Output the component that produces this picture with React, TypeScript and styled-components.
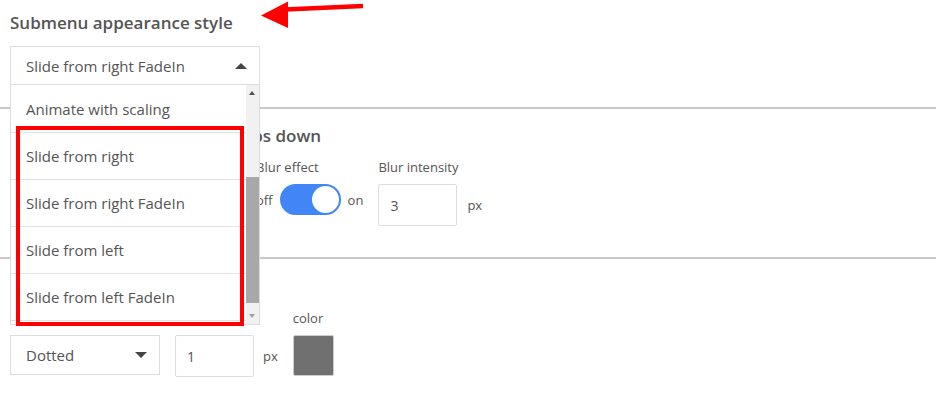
import React from 'react'
import styled, { createGlobalStyle } from 'styled-components'

const GlobalStyle = createGlobalStyle`
  html, body {
    margin: 0;
    padding: 0;
    background: #fff;
  }
  body {
    font-family: "Open Sans", "Noto Sans", sans-serif;
    color: #555;
  }
`

const options = [
  'Animate with scaling',
  'Slide from right',
  'Slide from right FadeIn',
  'Slide from left',
  'Slide from left FadeIn',
]

function App() {
  return (
    <Page>
      <GlobalStyle />
      <Section $pad="12px 10px 22px">
        <Heading>Submenu appearance style</Heading>
        <SelectWrap>
          <Select $width={250} $open>
            Slide from right FadeIn
            <Caret $up />
          </Select>
          <DropList>
            <Items>
              {options.map((o) => (
                <Item key={o}>{o}</Item>
              ))}
            </Items>
            <Scrollbar>
              <ScrollArrow $up />
              <Thumb />
              <ScrollArrow />
            </Scrollbar>
            <Highlight />
          </DropList>
        </SelectWrap>
        <Arrow width="110" height="34" viewBox="0 0 110 34">
          <path d="M108 6 L30 9.5" stroke="#f00" strokeWidth="4.5" fill="none" />
          <polygon points="6,15.5 33,1.5 33,28" fill="#f00" />
        </Arrow>
      </Section>

      <Section $pad="16px 10px 31px" $rule>
        <Heading>Blur page when submenu drops down</Heading>
        <Row $gap={15}>
          <Field>
            <Label>Overlay</Label>
            <Select $width={231}>None<Caret /></Select>
          </Field>
          <Field>
            <Label>Blur effect</Label>
            <Inline $gap={7}>
              <Small>off</Small>
              <Toggle $on>
                <Knob />
              </Toggle>
              <Small>on</Small>
            </Inline>
          </Field>
          <Field>
            <Label>Blur intensity</Label>
            <Inline $gap={10}>
              <NumberBox $width={79}>3</NumberBox>
              <Small>px</Small>
            </Inline>
          </Field>
        </Row>
      </Section>

      <Section $pad="17px 10px 20px" $rule>
        <Heading>Submenu border</Heading>
        <Row $gap={15}>
          <Field>
            <Label>Type</Label>
            <Select $width={150}>Dotted<Caret /></Select>
          </Field>
          <Field>
            <Label>width</Label>
            <Inline $gap={9}>
              <NumberBox $width={79}>1</NumberBox>
              <Small>px</Small>
            </Inline>
          </Field>
          <Field>
            <Label>color</Label>
            <Swatch $color="#707070" />
          </Field>
        </Row>
      </Section>
    </Page>
  )
}

export default App

const Page = styled.div`
  width: 936px;
  height: 406px;
  overflow: hidden;
  position: relative;
`

const Section = styled.div<{ $pad: string; $rule?: boolean }>`
  position: relative;
  padding: ${(p) => p.$pad};
  border-top: ${(p) => (p.$rule ? '2px solid #c8c8c8' : 'none')};
`

const Heading = styled.h3`
  margin: 0 0 12px;
  font-size: 17px;
  font-weight: 600;
  line-height: 22px;
  color: #555;
`

const SelectWrap = styled.div`
  position: relative;
  z-index: 5;
  width: 250px;
`

const Select = styled.div<{ $width: number; $open?: boolean }>`
  position: relative;
  box-sizing: border-box;
  width: ${(p) => p.$width}px;
  height: ${(p) => (p.$open ? 39 : 40)}px;
  border: 1px solid #ddd;
  padding-left: 15px;
  display: flex;
  align-items: center;
  font-size: 15px;
  color: #555;
  background: #fff;
`

const Caret = styled.span<{ $up?: boolean }>`
  position: absolute;
  right: 12px;
  top: 50%;
  margin-top: -3px;
  width: 0;
  height: 0;
  border-left: 6px solid transparent;
  border-right: 6px solid transparent;
  ${(p) => (p.$up ? 'border-bottom: 6px solid #444;' : 'border-top: 6px solid #444;')}
`

const DropList = styled.div`
  position: absolute;
  left: 0;
  top: 38px;
  box-sizing: border-box;
  width: 250px;
  height: 241px;
  border: 1px solid #ddd;
  background: #fff;
  display: flex;
`

const Items = styled.div`
  flex: 1;
  overflow: hidden;
`

const Item = styled.div`
  height: 47px;
  box-sizing: border-box;
  border-bottom: 1px solid #e2e2e2;
  display: flex;
  align-items: center;
  font-size: 15px;
  color: #555;
  margin-left: -10px;
  padding-left: 25px;
  &:first-child {
    height: 48px;
    margin-left: 0;
    padding-left: 15px;
  }
`

const Scrollbar = styled.div`
  width: 13px;
  background: #f1f1f1;
  display: flex;
  flex-direction: column;
  align-items: stretch;
`

const ScrollArrow = styled.div<{ $up?: boolean }>`
  height: 16px;
  position: relative;
  &::after {
    content: '';
    position: absolute;
    left: 3px;
    top: 6px;
    border-left: 3.5px solid transparent;
    border-right: 3.5px solid transparent;
    ${(p) => (p.$up ? 'border-bottom: 4px solid #505050;' : 'border-top: 4px solid #a3a3a3;')}
  }
`

const Thumb = styled.div`
  margin-top: 76px;
  height: 126px;
  background: #a8a8a8;
  margin-bottom: auto;
`

const Highlight = styled.div`
  position: absolute;
  left: 5px;
  top: 41px;
  width: 228px;
  height: 200px;
  box-sizing: border-box;
  border: 4.5px solid #f00;
  pointer-events: none;
`

const Arrow = styled.svg`
  position: absolute;
  left: 255px;
  top: 0;
`

const Row = styled.div<{ $gap: number }>`
  display: flex;
  align-items: flex-start;
  gap: ${(p) => p.$gap}px;
`

const Field = styled.div`
  display: flex;
  flex-direction: column;
`

const Label = styled.div`
  font-size: 13px;
  line-height: 17px;
  margin-bottom: 8px;
  color: #555;
`

const Inline = styled.div<{ $gap?: number }>`
  display: flex;
  align-items: center;
  gap: ${(p) => p.$gap ?? 8}px;
`

const Small = styled.span`
  font-size: 13px;
  color: #555;
`

const Toggle = styled.div<{ $on?: boolean }>`
  width: 61px;
  height: 31px;
  border-radius: 16px;
  background: ${(p) => (p.$on ? '#4285f4' : '#ccc')};
  display: flex;
  align-items: center;
  justify-content: ${(p) => (p.$on ? 'flex-end' : 'flex-start')};
  padding: 0 2px;
  box-sizing: border-box;
`

const Knob = styled.div`
  width: 27px;
  height: 27px;
  border-radius: 50%;
  background: #fff;
`

const NumberBox = styled.div<{ $width: number }>`
  box-sizing: border-box;
  width: ${(p) => p.$width}px;
  height: 42px;
  border: 1px solid #ddd;
  border-radius: 2px;
  display: flex;
  align-items: center;
  padding-left: 11px;
  font-size: 14px;
  color: #555;
`

const Swatch = styled.div<{ $color: string }>`
  width: 41px;
  height: 41px;
  box-sizing: border-box;
  border: 1px solid #ccc;
  border-radius: 2px;
  background: ${(p) => p.$color};
`
